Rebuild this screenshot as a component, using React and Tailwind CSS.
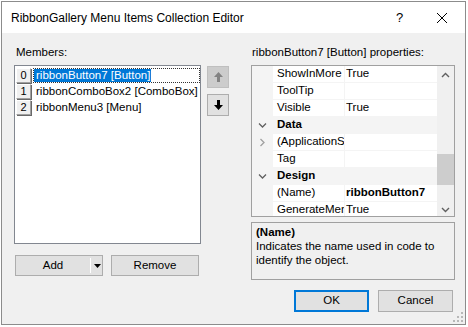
import React from "react";

const FONT = { fontFamily: '"Liberation Sans", Arial, sans-serif' };

const members = [
  { idx: 0, label: "ribbonButton7 [Button]", selected: true },
  { idx: 1, label: "ribbonComboBox2 [ComboBox]" },
  { idx: 2, label: "ribbonMenu3 [Menu]" },
];

const props = [
  { name: "ShowInMore", value: "True" },
  { name: "ToolTip", value: "" },
  { name: "Visible", value: "True" },
  { category: "Data" },
  { name: "(ApplicationSe", value: "", expander: true },
  { name: "Tag", value: "" },
  { category: "Design" },
  { name: "(Name)", value: "ribbonButton7", bold: true },
  { name: "GenerateMem", value: "True" },
];

const Chevron = ({ dir }) => (
  <svg width="9" height="9" viewBox="0 0 9 9">
    {dir === "down" ? (
      <path d="M1 2.5 L4.5 6 L8 2.5" fill="none" stroke="#606060" strokeWidth="1.3" />
    ) : (
      <path d="M2.5 1 L6 4.5 L2.5 8" fill="none" stroke="#a0a0a0" strokeWidth="1.3" />
    )}
  </svg>
);

const Arrow = ({ up, color }) => (
  <svg width="9" height="10" viewBox="0 0 9 10">
    {up ? (
      <path d="M4.5 0 L9 5 L6 5 L6 10 L3 10 L3 5 L0 5 Z" fill={color} />
    ) : (
      <path d="M4.5 10 L9 5 L6 5 L6 0 L3 0 L3 5 L0 5 Z" fill={color} />
    )}
  </svg>
);

export default function App() {
  return (
    <div className="w-[468px] h-[327px] bg-white pl-px pt-px" style={FONT}>
      <div className="w-[465px] h-[324px] border border-[#8c8c8c] flex flex-col text-[11.5px] text-black">
        {/* title bar */}
        <div className="h-[31px] bg-white flex items-center pl-[9px]">
          <span className="flex-1 text-[12px]">RibbonGallery Menu Items Collection Editor</span>
          <span className="w-[10px] text-[13px] mr-[30px]">?</span>
          <svg width="12" height="12" viewBox="0 0 12 12" className="mr-[17px]">
            <path d="M1 1 L11 11 M11 1 L1 11" stroke="#000" strokeWidth="1" />
          </svg>
        </div>

        {/* body */}
        <div className="flex-1 bg-[#f0f0f0] flex pl-[12px] pr-[10px] pt-[12px] relative">
          {/* members column */}
          <div className="w-[187px] flex flex-col">
            <div className="h-[15px] leading-[15px] pl-[2px]">Members:</div>
            <div className="mt-[5px] h-[179px] bg-white border border-[#828790] pt-px pl-px">
              {members.map((m) => (
                <div key={m.idx} className="h-[16px] flex items-center">
                  <div className="w-[15px] h-[15px] bg-[#f0f0f0] border-t border-l border-white border-r border-b border-r-[#a0a0a0] border-b-[#a0a0a0] shadow-[1px_1px_0_#696969] flex items-center justify-center text-[11px] leading-none">
                    {m.idx}
                  </div>
                  <div
                    className={
                      "ml-[2px] h-[15px] w-[167px] flex items-center border border-dotted whitespace-nowrap " +
                      (m.selected ? "border-[#333333]" : "border-transparent")
                    }
                  >
                    <span className={"h-[13px] leading-[13px] pl-[2px] pr-[1px] " + (m.selected ? "bg-[#0078d7] text-white" : "")}>
                      {m.label}
                    </span>
                  </div>
                </div>
              ))}
            </div>
            <div className="mt-[11px] flex gap-[8px] pl-px">
              <div className="w-[88px] h-[21px] bg-[#e1e1e1] border border-[#adadad] flex items-center">
                <span className="w-[74px] text-center">Add</span>
                <span className="w-px h-[15px] bg-white" />
                <svg width="7" height="4" viewBox="0 0 7 4" className="ml-[3px]">
                  <path d="M0 0 L7 0 L3.5 4 Z" fill="#000" />
                </svg>
              </div>
              <div className="w-[88px] h-[21px] bg-[#e1e1e1] border border-[#adadad] flex items-center justify-center">
                Remove
              </div>
            </div>
          </div>

          {/* move buttons */}
          <div className="ml-[6px] pt-[21px] flex flex-col gap-[6px]">
            <div className="w-[22px] h-[22px] bg-[#cccccc] border border-[#bfbfbf] flex items-center justify-center">
              <Arrow up color="#838383" />
            </div>
            <div className="w-[22px] h-[22px] bg-[#e1e1e1] border border-[#adadad] flex items-center justify-center">
              <Arrow color="#000" />
            </div>
          </div>

          {/* properties column */}
          <div className="ml-[22px] w-[204px] flex flex-col">
            <div className="h-[15px] leading-[15px] pl-[1px] whitespace-nowrap">ribbonButton7 [Button] properties:</div>
            <div className="mt-[5px] h-[152px] border border-[#a0a0a0] bg-[#f4f4f4] flex overflow-hidden">
              <div className="flex-1 flex flex-col">
                {props.map((p, i) =>
                  p.category ? (
                    <div key={i} className="h-[17px] shrink-0 flex items-center font-bold border-b border-[#f4f4f4]">
                      <span className="w-[21px] flex justify-center"><Chevron dir="down" /></span>
                      <span className="pl-[4px]">{p.category}</span>
                    </div>
                  ) : (
                    <div key={i} className="h-[17px] shrink-0 flex">
                      <span className="w-[21px] flex items-center justify-center">
                        {p.expander && <Chevron dir="right" />}
                      </span>
                      <span className="w-[71px] bg-white border-b border-[#f4f4f4] flex items-center pl-[4px] whitespace-nowrap overflow-hidden">
                        {p.name}
                      </span>
                      <span className="w-px bg-[#f4f4f4]" />
                      <span className={"flex-1 bg-white border-b border-[#f4f4f4] flex items-center pl-[1px] whitespace-nowrap " + (p.bold ? "font-bold" : "")}>
                        {p.value}
                      </span>
                    </div>
                  )
                )}
              </div>
              {/* scrollbar */}
              <div className="w-[17px] bg-[#f0f0f0] flex flex-col items-center">
                <svg width="9" height="6" viewBox="0 0 9 6" className="mt-[6px]">
                  <path d="M1 5 L4.5 1.5 L8 5" fill="none" stroke="#606060" strokeWidth="1.4" />
                </svg>
                <div className="mt-[76px] w-[17px] h-[31px] bg-[#cdcdcd]" />
                <svg width="9" height="6" viewBox="0 0 9 6" className="mt-[22px]">
                  <path d="M1 1 L4.5 4.5 L8 1" fill="none" stroke="#606060" strokeWidth="1.4" />
                </svg>
              </div>
            </div>
            <div className="mt-[5px] h-[58px] border border-[#a0a0a0] bg-[#f0f0f0] px-[4px] pt-[2px] leading-[14px]">
              <div className="font-bold">(Name)</div>
              <div>Indicates the name used in code to identify the object.</div>
            </div>
            <div className="mt-[10px] flex justify-end gap-[9px] pr-[2px]">
              <div className="w-[75px] h-[22px] bg-[#e1e1e1] border-2 border-[#0078d7] flex items-center justify-center">OK</div>
              <div className="w-[75px] h-[22px] bg-[#e1e1e1] border border-[#adadad] flex items-center justify-center">Cancel</div>
            </div>
          </div>

          {/* size grip */}
          <svg width="10" height="10" viewBox="0 0 10 10" className="absolute right-[2px] bottom-[2px]">
            <g fill="#b8b8b8">
              <rect x="8" y="0" width="2" height="2" />
              <rect x="4" y="4" width="2" height="2" />
              <rect x="8" y="4" width="2" height="2" />
              <rect x="0" y="8" width="2" height="2" />
              <rect x="4" y="8" width="2" height="2" />
              <rect x="8" y="8" width="2" height="2" />
            </g>
          </svg>
        </div>
      </div>
    </div>
  );
}
